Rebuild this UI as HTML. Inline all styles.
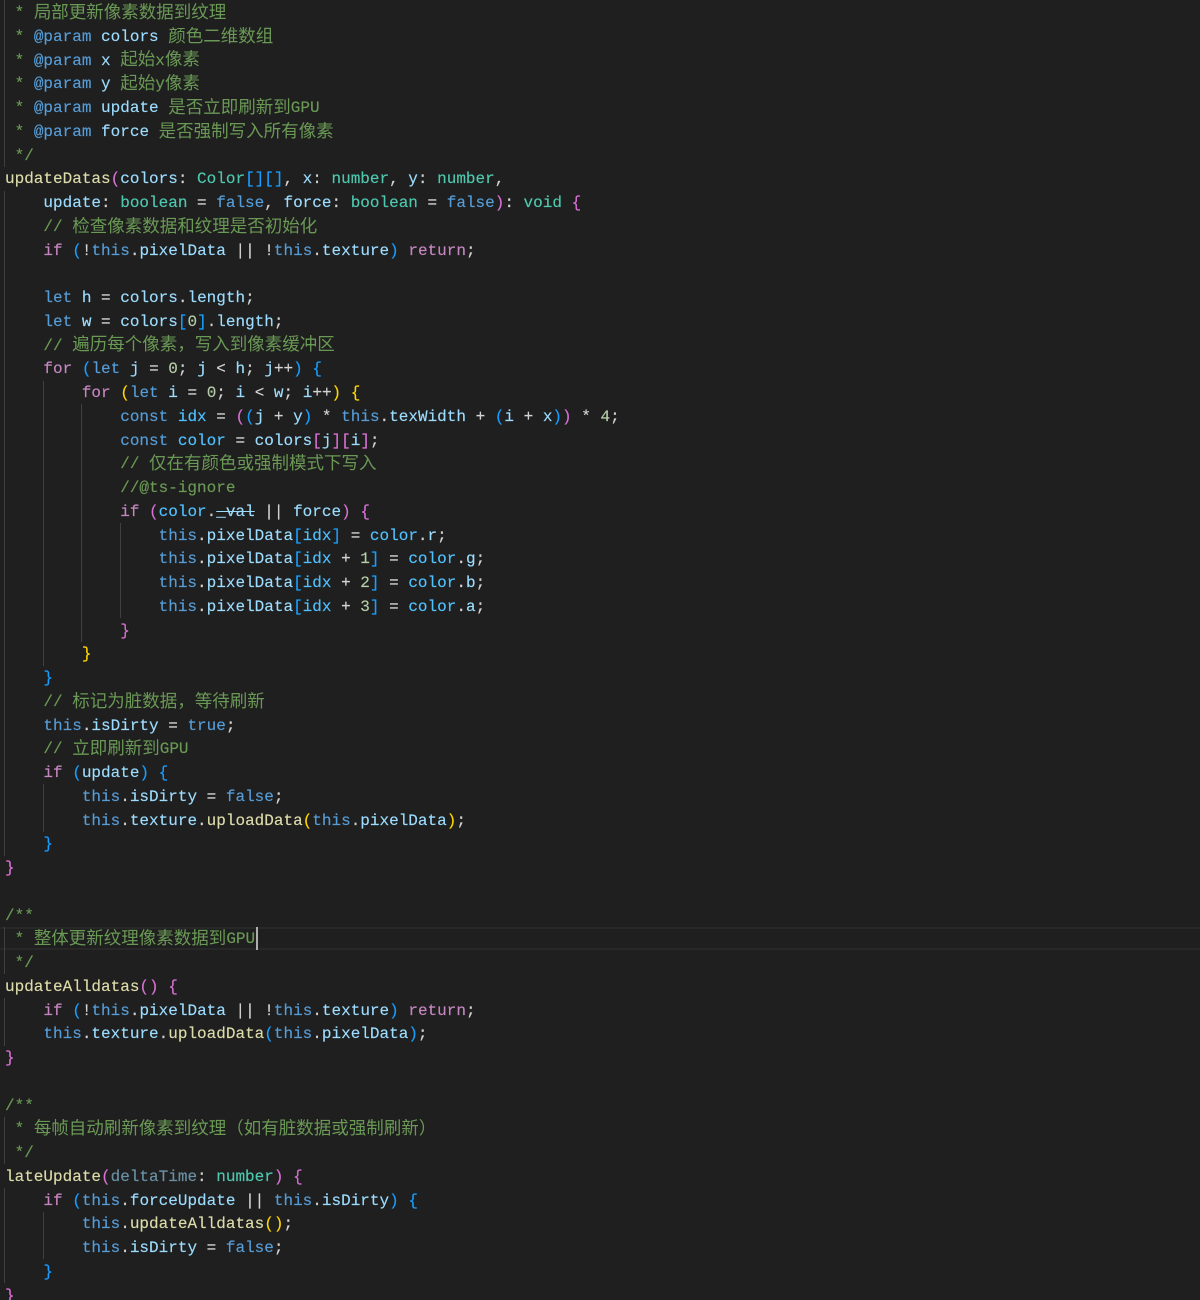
<!DOCTYPE html>
<html><head><meta charset="utf-8">
<style>
html,body{margin:0;padding:0;background:#1f1f1f}
#e{position:relative;width:1200px;height:1300px;overflow:hidden;background:#1f1f1f;font-family:"Liberation Mono","Noto Sans CJK SC",monospace;font-size:16px;color:#d4d4d4;font-variant-ligatures:none;-webkit-text-stroke:.15px}
#t{position:absolute;left:0;top:2.24px;width:1200px}
.l{position:relative;height:23.75px;line-height:23.75px;padding-left:5px;white-space:pre}
.g{position:absolute;width:1px;background:#404040}
i{font-style:normal;font-family:"Noto Sans CJK SC","Liberation Sans",sans-serif;font-size:17.5px;line-height:0;position:relative;top:.6px;-webkit-text-stroke:0}
.k{color:#c586c0}.s{color:#569cd6}.v{color:#9cdcfe}.f{color:#dcdcaa}.t{color:#4ec9b0}.n{color:#b5cea8}.c{color:#6a9955}.o{color:#4fc1ff}
.y{color:#ffd700}.p{color:#da70d6}.b{color:#179fff}
.d{color:#9cdcfe;opacity:.6}
.x{color:#9cdcfe;text-decoration:line-through}
.h{position:absolute;left:0;top:927px;width:1200px;height:23px;border-top:2px solid #282828;border-bottom:2px solid #282828;box-sizing:border-box}
.u{position:absolute;left:256px;top:927px;width:2px;height:23px;background:#aeafad}
</style></head><body><div id="e">
<div class="h"></div>
<div class="g" style="left:4px;top:0;height:166.95px"></div>
<div class="g" style="left:4px;top:190.7px;height:665px"></div>
<div class="g" style="left:4px;top:926.95px;height:47.5px"></div>
<div class="g" style="left:4px;top:998.2px;height:47.5px"></div>
<div class="g" style="left:4px;top:1116.95px;height:47.5px"></div>
<div class="g" style="left:4px;top:1188.2px;height:95px"></div>
<div class="g" style="left:43px;top:380.7px;height:285px"></div>
<div class="g" style="left:43px;top:784.45px;height:47.5px"></div>
<div class="g" style="left:43px;top:1211.95px;height:47.5px"></div>
<div class="g" style="left:81px;top:404.45px;height:237.5px"></div>
<div class="g" style="left:120px;top:523.2px;height:95px"></div>
<div id="t">
<div class="l c"> * <i>局部更新像素数据到纹理</i></div>
<div class="l c"> * <span class="s">@param</span> <span class="v">colors</span> <i>颜色二维数组</i></div>
<div class="l c"> * <span class="s">@param</span> <span class="v">x</span> <i>起始</i>x<i>像素</i></div>
<div class="l c"> * <span class="s">@param</span> <span class="v">y</span> <i>起始</i>y<i>像素</i></div>
<div class="l c"> * <span class="s">@param</span> <span class="v">update</span> <i>是否立即刷新到</i>GPU</div>
<div class="l c"> * <span class="s">@param</span> <span class="v">force</span> <i>是否强制写入所有像素</i></div>
<div class="l c"> */</div>
<div class="l"><span class="f">updateDatas</span><span class="p">(</span><span class="v">colors</span>: <span class="t">Color</span><span class="b">[][]</span>, <span class="v">x</span>: <span class="t">number</span>, <span class="v">y</span>: <span class="t">number</span>,</div>
<div class="l">    <span class="v">update</span>: <span class="t">boolean</span> = <span class="s">false</span>, <span class="v">force</span>: <span class="t">boolean</span> = <span class="s">false</span><span class="p">)</span>: <span class="t">void</span> <span class="p">{</span></div>
<div class="l c">    // <i>检查像素数据和纹理是否初始化</i></div>
<div class="l">    <span class="k">if</span> <span class="b">(</span>!<span class="s">this</span>.<span class="v">pixelData</span> || !<span class="s">this</span>.<span class="v">texture</span><span class="b">)</span> <span class="k">return</span>;</div>
<div class="l"> </div>
<div class="l">    <span class="s">let</span> <span class="v">h</span> = <span class="v">colors</span>.<span class="v">length</span>;</div>
<div class="l">    <span class="s">let</span> <span class="v">w</span> = <span class="v">colors</span><span class="b">[</span><span class="n">0</span><span class="b">]</span>.<span class="v">length</span>;</div>
<div class="l c">    // <i>遍历每个像素，写入到像素缓冲区</i></div>
<div class="l">    <span class="k">for</span> <span class="b">(</span><span class="s">let</span> <span class="v">j</span> = <span class="n">0</span>; <span class="v">j</span> &lt; <span class="v">h</span>; <span class="v">j</span>++<span class="b">)</span> <span class="b">{</span></div>
<div class="l">        <span class="k">for</span> <span class="y">(</span><span class="s">let</span> <span class="v">i</span> = <span class="n">0</span>; <span class="v">i</span> &lt; <span class="v">w</span>; <span class="v">i</span>++<span class="y">)</span> <span class="y">{</span></div>
<div class="l">            <span class="s">const</span> <span class="o">idx</span> = <span class="p">(</span><span class="b">(</span><span class="v">j</span> + <span class="v">y</span><span class="b">)</span> * <span class="s">this</span>.<span class="v">texWidth</span> + <span class="b">(</span><span class="v">i</span> + <span class="v">x</span><span class="b">)</span><span class="p">)</span> * <span class="n">4</span>;</div>
<div class="l">            <span class="s">const</span> <span class="o">color</span> = <span class="v">colors</span><span class="p">[</span><span class="v">j</span><span class="p">][</span><span class="v">i</span><span class="p">]</span>;</div>
<div class="l c">            // <i>仅在有颜色或强制模式下写入</i></div>
<div class="l c">            //@ts-ignore</div>
<div class="l">            <span class="k">if</span> <span class="p">(</span><span class="o">color</span>.<span class="x">_val</span> || <span class="v">force</span><span class="p">)</span> <span class="p">{</span></div>
<div class="l">                <span class="s">this</span>.<span class="v">pixelData</span><span class="b">[</span><span class="o">idx</span><span class="b">]</span> = <span class="o">color</span>.<span class="v">r</span>;</div>
<div class="l">                <span class="s">this</span>.<span class="v">pixelData</span><span class="b">[</span><span class="o">idx</span> + <span class="n">1</span><span class="b">]</span> = <span class="o">color</span>.<span class="v">g</span>;</div>
<div class="l">                <span class="s">this</span>.<span class="v">pixelData</span><span class="b">[</span><span class="o">idx</span> + <span class="n">2</span><span class="b">]</span> = <span class="o">color</span>.<span class="v">b</span>;</div>
<div class="l">                <span class="s">this</span>.<span class="v">pixelData</span><span class="b">[</span><span class="o">idx</span> + <span class="n">3</span><span class="b">]</span> = <span class="o">color</span>.<span class="v">a</span>;</div>
<div class="l">            <span class="p">}</span></div>
<div class="l">        <span class="y">}</span></div>
<div class="l">    <span class="b">}</span></div>
<div class="l c">    // <i>标记为脏数据，等待刷新</i></div>
<div class="l">    <span class="s">this</span>.<span class="v">isDirty</span> = <span class="s">true</span>;</div>
<div class="l c">    // <i>立即刷新到</i>GPU</div>
<div class="l">    <span class="k">if</span> <span class="b">(</span><span class="v">update</span><span class="b">)</span> <span class="b">{</span></div>
<div class="l">        <span class="s">this</span>.<span class="v">isDirty</span> = <span class="s">false</span>;</div>
<div class="l">        <span class="s">this</span>.<span class="v">texture</span>.<span class="f">uploadData</span><span class="y">(</span><span class="s">this</span>.<span class="v">pixelData</span><span class="y">)</span>;</div>
<div class="l">    <span class="b">}</span></div>
<div class="l"><span class="p">}</span></div>
<div class="l"> </div>
<div class="l c">/**</div>
<div class="l c"> * <i>整体更新纹理像素数据到</i>GPU</div>
<div class="l c"> */</div>
<div class="l"><span class="f">updateAlldatas</span><span class="p">()</span> <span class="p">{</span></div>
<div class="l">    <span class="k">if</span> <span class="b">(</span>!<span class="s">this</span>.<span class="v">pixelData</span> || !<span class="s">this</span>.<span class="v">texture</span><span class="b">)</span> <span class="k">return</span>;</div>
<div class="l">    <span class="s">this</span>.<span class="v">texture</span>.<span class="f">uploadData</span><span class="b">(</span><span class="s">this</span>.<span class="v">pixelData</span><span class="b">)</span>;</div>
<div class="l"><span class="p">}</span></div>
<div class="l"> </div>
<div class="l c">/**</div>
<div class="l c"> * <i>每帧自动刷新像素到纹理（如有脏数据或强制刷新）</i></div>
<div class="l c"> */</div>
<div class="l"><span class="f">lateUpdate</span><span class="p">(</span><span class="d">deltaTime</span>: <span class="t">number</span><span class="p">)</span> <span class="p">{</span></div>
<div class="l">    <span class="k">if</span> <span class="b">(</span><span class="s">this</span>.<span class="v">forceUpdate</span> || <span class="s">this</span>.<span class="v">isDirty</span><span class="b">)</span> <span class="b">{</span></div>
<div class="l">        <span class="s">this</span>.<span class="f">updateAlldatas</span><span class="y">()</span>;</div>
<div class="l">        <span class="s">this</span>.<span class="v">isDirty</span> = <span class="s">false</span>;</div>
<div class="l">    <span class="b">}</span></div>
<div class="l"><span class="p">}</span></div>
</div>
<div class="u"></div>
</div></body></html>
